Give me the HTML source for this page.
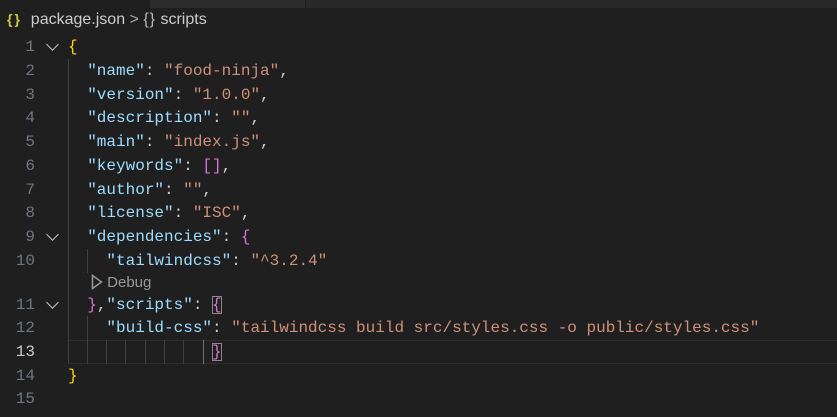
<!DOCTYPE html>
<html><head><style>
body{margin:0;width:837px;height:417px;background:#1f1f1f;overflow:hidden;position:relative;font-family:"Liberation Mono",monospace;}
.strip{position:absolute;top:0;height:8px}
.ln{position:absolute;left:0;width:35px;text-align:right;color:#6e7681;font-size:16px;line-height:24px}
.code{position:absolute;left:68px;font-size:16px;line-height:24px;color:#cccccc;white-space:pre}
.k{color:#9cdcfe}.s{color:#ce9178}.y{color:#ffd700}.p{color:#da70d6}
.g{position:absolute;width:1px;background:#404040}
.chev{position:absolute;left:48px;width:8px;height:8px;border-right:1.2px solid #c5c5c5;border-bottom:1.2px solid #c5c5c5;transform:rotate(45deg)}
</style></head><body>
<div class="strip" style="left:0;width:150px;background:#1f1f1f"></div>
<div class="strip" style="left:150px;width:155px;background:#2c2c2c"></div>
<div class="strip" style="left:305px;width:1px;background:#1f1f1f"></div>
<div class="strip" style="left:306px;width:531px;background:#292929"></div>
<div style="position:absolute;top:11px;left:7px;font-family:'Liberation Sans',sans-serif;font-size:16px;color:#cccccc;white-space:pre"><span style="color:#cbcb41;font-size:14px;font-weight:bold;letter-spacing:2px">{}</span>  package.json <span style="color:#aaa">&gt;</span> <span style="color:#bbb;letter-spacing:1px">{}</span> scripts</div>

<div style="position:absolute;left:68px;top:340px;width:769px;height:22px;border-top:1px solid #2d2d2d;border-bottom:1px solid #2d2d2d"></div>

<div class="ln" style="top:35px">1</div>
<div class="ln" style="top:59px">2</div>
<div class="ln" style="top:83px">3</div>
<div class="ln" style="top:106px">4</div>
<div class="ln" style="top:130px">5</div>
<div class="ln" style="top:154px">6</div>
<div class="ln" style="top:178px">7</div>
<div class="ln" style="top:201px">8</div>
<div class="ln" style="top:225px">9</div>
<div class="ln" style="top:249px">10</div>
<div class="ln" style="top:293px">11</div>
<div class="ln" style="top:316px">12</div>
<div class="ln" style="top:340px;color:#cccccc">13</div>
<div class="ln" style="top:364px">14</div>
<div class="ln" style="top:387px">15</div>

<div class="chev" style="top:40px"></div>
<div class="chev" style="top:230px"></div>
<div class="chev" style="top:298px"></div>

<div class="g" style="left:68px;top:59px;height:304px"></div>
<div class="g" style="left:87px;top:249px;height:24px"></div>
<div class="g" style="left:87px;top:316px;height:48px"></div>
<div class="g" style="left:106px;top:340px;height:24px"></div>
<div class="g" style="left:125px;top:340px;height:24px"></div>
<div class="g" style="left:145px;top:340px;height:24px"></div>
<div class="g" style="left:164px;top:340px;height:24px"></div>
<div class="g" style="left:183px;top:340px;height:24px"></div>
<div class="g" style="left:203px;top:340px;height:24px;background:#707070"></div>

<div class="code" style="top:35px"><span class="y">{</span></div>
<div class="code" style="top:59px">  <span class="k">"name"</span>: <span class="s">"food-ninja"</span>,</div>
<div class="code" style="top:83px">  <span class="k">"version"</span>: <span class="s">"1.0.0"</span>,</div>
<div class="code" style="top:106px">  <span class="k">"description"</span>: <span class="s">""</span>,</div>
<div class="code" style="top:130px">  <span class="k">"main"</span>: <span class="s">"index.js"</span>,</div>
<div class="code" style="top:154px">  <span class="k">"keywords"</span>: <span class="p">[]</span>,</div>
<div class="code" style="top:178px">  <span class="k">"author"</span>: <span class="s">""</span>,</div>
<div class="code" style="top:201px">  <span class="k">"license"</span>: <span class="s">"ISC"</span>,</div>
<div class="code" style="top:225px">  <span class="k">"dependencies"</span>: <span class="p">{</span></div>
<div class="code" style="top:249px">    <span class="k">"tailwindcss"</span>: <span class="s">"^3.2.4"</span></div>
<div style="position:absolute;left:91px;top:274px;font-family:'Liberation Sans',sans-serif;font-size:15px;color:#999;white-space:pre"><svg width="12" height="16" viewBox="0 0 12 16" style="vertical-align:-3px"><path d="M1.5 1.5 L10.5 8 L1.5 14.5 Z" fill="none" stroke="#999" stroke-width="1.5"/></svg> Debug</div>
<div class="code" style="top:293px">  <span class="p">}</span>,<span class="k">"scripts"</span>: <span class="p" style="outline:1px solid #888;outline-offset:-1px">{</span></div>
<div class="code" style="top:316px">    <span class="k">"build-css"</span>: <span class="s">"tailwindcss build src/styles.css -o public/styles.css"</span></div>
<div class="code" style="top:340px">               <span class="p" style="outline:1px solid #888;outline-offset:-1px">}</span></div>
<div class="code" style="top:364px"><span class="y">}</span></div>
</body></html>
